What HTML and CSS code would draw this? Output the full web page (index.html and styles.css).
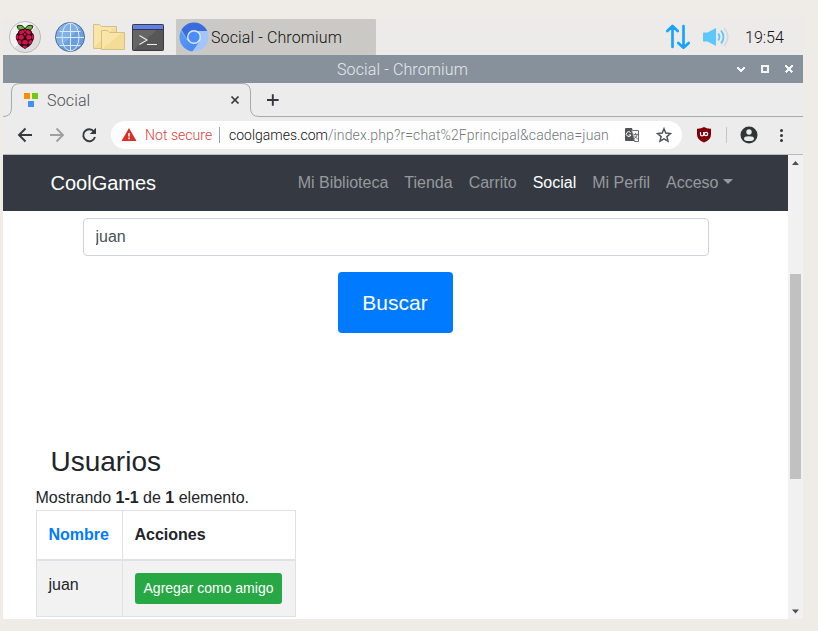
FILE: index.html
```
<!DOCTYPE html>
<html lang="es">
<head>
<meta charset="utf-8">
<title>Social</title>
<link rel="stylesheet" href="styles.css">
</head>
<body>
<div class="desktop">
  <header class="taskbar">
    <svg class="launchers" viewBox="3 19 165 36">
      <defs>
        <linearGradient id="disc" x1="0" y1="0" x2="1" y2="1"><stop offset=".5" stop-color="#f2f2f2"/><stop offset=".5" stop-color="#dedede"/></linearGradient>
        <linearGradient id="folder" x1="0" y1="0" x2="1" y2="1"><stop offset=".5" stop-color="#fae5a8"/><stop offset=".5" stop-color="#f4dc96"/></linearGradient>
        <linearGradient id="earth" x1="0" y1="0" x2="1" y2="1"><stop offset=".5" stop-color="#7fb0e8"/><stop offset=".5" stop-color="#6b9fdb"/></linearGradient>
        <linearGradient id="screen" x1="0" y1="0" x2="1" y2="1"><stop offset=".5" stop-color="#656565"/><stop offset=".5" stop-color="#575757"/></linearGradient>
      </defs>
      <circle cx="25" cy="37" r="15.6" fill="url(#disc)" stroke="#b5b5b5" stroke-width=".9"/>
      <path d="M24.7 31Q18.500 32 17 26Q23 23.500 25 29.500Q27 23.500 33 26Q31.500 32 25.300 31Z" fill="#6cae3c" stroke="#1b2912" stroke-width="1"/>
      <path d="M25 29.500C29 28 32 30 32.200 33C35 35 34.600 39 32.700 41C32 45 28 47 25 49C22 47 18 45 17.300 41C15.400 39 15 35 17.800 33C18 30 21 28 25 29.500Z" fill="#260811"/>
      <g fill="#d2124c"><ellipse cx="21.600" cy="32.200" rx="2.700" ry="1.900" transform="rotate(-25 21.600 32.200)"/><ellipse cx="28.400" cy="32.200" rx="2.700" ry="1.900" transform="rotate(25 28.400 32.200)"/><circle cx="25" cy="30.700" r="1.100"/><circle cx="21.300" cy="37.200" r="2.500"/><circle cx="28.700" cy="37.200" r="2.500"/><ellipse cx="17.300" cy="37" rx="1.100" ry="2.300"/><ellipse cx="32.700" cy="37" rx="1.100" ry="2.300"/><ellipse cx="25" cy="42.200" rx="2.800" ry="2.200"/><ellipse cx="19.700" cy="42" rx="1.600" ry="2.300" transform="rotate(-25 19.700 42)"/><ellipse cx="30.300" cy="42" rx="1.600" ry="2.300" transform="rotate(25 30.300 42)"/><ellipse cx="25" cy="46.700" rx="2.200" ry="1.200"/><circle cx="25" cy="34.200" r="1.200"/></g>
      <circle cx="70" cy="37" r="14.500" fill="url(#earth)" stroke="#4b6f9c"/>
      <g fill="none" stroke="#dbe8f6" stroke-width="1"><path d="M70.500 23V51M56 37.500H84M59.500 31.500H80.500M59.500 45.500H80.500"/><ellipse cx="70.500" cy="37" rx="8.500" ry="14"/></g>
      <g fill="url(#folder)" stroke="#d5bf85"><path d="M93.500 24.500H99.500L101.500 26.500H116.500V48.500H93.500Z"/><path d="M101.500 30.500H107.500L109.500 32.500H124.500V49.500H101.500Z"/></g>
      <rect x="132.500" y="24.500" width="31" height="26" rx=".8" fill="url(#screen)" stroke="#3b3b3f"/>
      <path d="M133 25H163V29.500H133Z" fill="#627fe5"/><path d="M133 29.500H163" stroke="#30365a"/>
      <path d="M139.500 35.500L147 40L139.500 44.500M147 44.500H157" fill="none" stroke="#eee" stroke-width="1.100"/>
    </svg>
    <div class="task">
      <svg viewBox="0 0 30 30"><defs><clipPath id="ball"><circle cx="15" cy="15" r="14.500"/></clipPath><linearGradient id="blue" x1="0" y1="0" x2="1" y2="1"><stop stop-color="#5ba0f7"/><stop offset="1" stop-color="#4683ef"/></linearGradient></defs>
        <g clip-path="url(#ball)"><path fill="#a4c5fb" d="M0 0H30V30H0Z"/><path fill="url(#blue)" d="M0 5L8 18L15 22L20 20L13 30H0Z"/><path fill="#3a6ddb" d="M2 7L6 0H27L30 9H15L8 17Z"/></g>
        <circle cx="15" cy="15" r="7" fill="#dce9ff"/><circle cx="15" cy="15" r="5.600" fill="#4b8df6"/></svg>
      <span>Social - Chromium</span>
    </div>
    <svg class="status" viewBox="664 19 68 36">
      <g fill="none" stroke="#16a5fb" stroke-width="2.700" stroke-linecap="round" stroke-linejoin="round"><path d="M672.500 47V26.500M667.300 31L672.500 26L677.700 31M683.500 26V47M678.300 43L683.500 47.700L688.700 43"/></g>
      <path fill="#5dc6fb" d="M703.500 32.500H707.500L716 28V46L707.500 41.500H703.500Q703 41.500 703 40.500V33.500Q703 32.500 703.500 32.500Z"/>
      <path d="M718.200 33.500Q720.700 37 718.200 40.500M721 30.500Q726 37 721 43.500" fill="none" stroke="#5dc6fb" stroke-width="1.800"/><path d="M724 28Q731.500 37 724 46" fill="none" stroke="#d7d8da" stroke-width="1.600"/>
    </svg>
    <time>19:54</time>
  </header>

  <main class="window">
    <div class="titlebar">
      <span>Social - Chromium</span>
      <svg viewBox="733 62 64 14" shape-rendering="crispEdges"><path d="M737.500 67.500L741 71L744.500 67.500" fill="none" stroke="#f3f4f5" stroke-width="2"/><rect x="762" y="66" width="6" height="6" fill="none" stroke="#f3f4f5" stroke-width="2"/><path d="M785.500 65.500L792.500 72.500M792.500 65.500L785.500 72.500" stroke="#f3f4f5" stroke-width="2"/></svg>
    </div>
    <div class="tabs">
      <svg class="tab-outline" viewBox="3 83 800 34"><path d="M3 116.500Q11.500 116.500 11.500 108V92Q11.500 83.500 20 83.500H242Q250.500 83.500 250.500 92V108Q250.500 116.500 259 116.500H803" fill="none" stroke="#a7a9aa"/></svg>
      <svg class="favicon" viewBox="0 0 14 14"><path fill="#ff8d00" d="M0 0H6V6H0Z"/><path fill="#73ca0a" d="M8 0H14V6H8Z"/><path fill="#4093f2" d="M4 8H10V14H4Z"/></svg>
      <span>Social</span>
      <svg class="tab-actions" viewBox="230 92 50 16"><path d="M231.500 96.500L238.500 103.500M238.500 96.500L231.500 103.500" stroke="#32383d" stroke-width="1.700"/><path d="M272.800 94.200V105.800M267 100H278.600" stroke="#32383d" stroke-width="1.900"/></svg>
    </div>
    <div class="toolbar">
      <svg class="history" viewBox="17 125 80 20" fill="none" stroke-width="1.900"><path d="M32 135H19.500M25.500 128.500L19 135L25.500 141.500" stroke="#343b40"/><path d="M50 135H62.500M56.500 128.500L63 135L56.500 141.500" stroke="#9da0a1"/><path d="M94 131.500A6 6 0 1 0 95 137" stroke="#343b40"/><path fill="#343b40" d="M96 127.800V134H89.800Z"/></svg>
      <div class="address">
        <svg class="warning" viewBox="0 0 16 14"><path fill="#d93025" d="M8 0L15.500 13H.500Z"/><path d="M8 5V8.500M8 9.500V11.300" stroke="#fff" stroke-width="1.600"/></svg>
        <span class="insecure">Not secure</span><i></i><span class="url"><b>coolgames.com</b>/index.php?r=chat%2Fprincipal&amp;cadena=juan</span>
        <svg class="page-tools" viewBox="623 126 50 18"><path fill="#505456" d="M626 128H632L636 141H626Q625 141 625 140V129Q625 128 626 128Z"/><path d="M632.500 130.500H638.500V141.500H634.500L631.500 130.500" fill="#f7f7f7" stroke="#686b6d"/><path d="M630.700 132.700A2.400 2.400 0 1 0 631 135H628.700" fill="none" stroke="#fff" stroke-width="1"/><path d="M633.500 134.500H638M635.500 133V134.500M637.300 134.500Q636.500 137.500 633.500 139M634 135.500L638 139.500" fill="none" stroke="#666" stroke-width=".9"/><path d="M664 128.800L665.800 133.100L670.400 133.500L666.900 136.600L668 141.200L664 138.800L660 141.200L661.100 136.600L657.600 133.500L662.200 133.100Z" fill="none" stroke="#50565a" stroke-width="1.500"/></svg>
      </div>
      <svg class="extensions" viewBox="694 124 96 22"><path d="M704 127Q707 129 711 128.800V134.500Q711 140 704 142.500Q697 140 697 134.500V128.800Q701 129 704 127Z" fill="#800008"/><path d="M700.500 132V134Q700.500 136 702 136Q703.700 136 703.700 134V132" fill="none" stroke="#fff" stroke-width="1.200"/><circle cx="706" cy="134" r="1.700" fill="none" stroke="#fff" stroke-width="1.200"/><path d="M726.500 127V143" stroke="#c2c4c5"/><circle cx="749" cy="135" r="8.500" fill="#303638"/><circle cx="749" cy="132" r="2.700" fill="#ececec"/><ellipse cx="749" cy="138.700" rx="5" ry="2.400" fill="#ececec"/><g fill="#303638"><circle cx="781.500" cy="130.500" r="1.500"/><circle cx="781.500" cy="135.500" r="1.500"/><circle cx="781.500" cy="140.500" r="1.500"/></g></svg>
    </div>
    <div class="viewport">
      <div class="page">
        <nav class="navbar"><a class="brand">CoolGames</a><a>Mi Biblioteca</a><a>Tienda</a><a>Carrito</a><a class="active">Social</a><a>Mi Perfil</a><a class="dropdown">Acceso</a></nav>
        <form class="search"><input type="text" value="juan" aria-label="Buscar usuarios"><button type="button">Buscar</button></form>
        <section class="users">
          <h2>Usuarios</h2>
          <p>Mostrando <b>1-1</b> de <b>1</b> elemento.</p>
          <table>
            <thead><tr><th><a>Nombre</a></th><th>Acciones</th></tr></thead>
            <tbody><tr><td>juan</td><td><button type="button">Agregar como amigo</button></td></tr></tbody>
          </table>
        </section>
      </div>
      <div class="scrollbar">
        <svg viewBox="0 0 15 15"><path fill="#505050" d="M4 10L7.500 6L11 10Z"/></svg>
        <div class="thumb"></div>
        <svg viewBox="0 0 15 15"><path fill="#505050" d="M4 5.500H11L7.500 9.500Z"/></svg>
      </div>
    </div>
  </main>
</div>
</body>
</html>
```
FILE: styles.css
```
* { box-sizing: border-box; }
body { margin: 0; background: #efebe6; overflow: hidden; font-family: "Liberation Sans", sans-serif; color: #212529; }
svg { display: block; flex: none; }
.desktop { width: 818px; height: 631px; padding: 19px 15px 12px 3px; }
.taskbar, .titlebar, .tabs, .toolbar { font-family: Roboto, sans-serif; font-weight: 300; white-space: nowrap; }
.taskbar { display: flex; height: 36px; align-items: center; background: #edebea; font-size: 16px; color: #111; }
.launchers { width: 165px; height: 36px; }
.task { width: 200px; height: 36px; margin-left: 8px; padding-left: 3px; display: flex; align-items: center; gap: 2px; background: #cbc9c5; border-radius: 1px; letter-spacing: .12px; }
.task svg { width: 30px; height: 30px; }
.status { width: 68px; height: 36px; margin-left: 288px; }
.taskbar time { margin-left: 13px; }
.window { width: 800px; height: 564px; }
.titlebar { height: 28px; padding: 0 6px 0 334px; display: flex; align-items: center; justify-content: space-between; background: #87919b; color: #e6e9eb; font-size: 16px; letter-spacing: .12px; }
.titlebar svg { width: 64px; height: 14px; }
.tabs { position: relative; height: 34px; padding-left: 21px; display: flex; align-items: center; background: #ececec; color: #4b5054; font-size: 16px; letter-spacing: .15px; }
.tab-outline { position: absolute; left: 0; top: 0; width: 800px; height: 34px; }
.favicon { width: 14px; height: 14px; }
.tabs span { width: 183px; margin-left: 9px; }
.tab-actions { width: 50px; height: 16px; }
.toolbar { height: 38px; padding: 0 13px 1px 14px; border-bottom: 1px solid #b9babb; display: flex; align-items: center; background: #ececec; }
.history { width: 80px; height: 20px; }
.address { width: 571px; height: 28px; margin-left: 14px; padding-left: 10px; border-radius: 14px; display: flex; align-items: center; background: #fff; font-size: 14px; }
.warning { width: 16px; height: 14px; }
.insecure { width: 67px; margin-left: 8px; color: #d94137; letter-spacing: .05px; }
.address i { width: 1px; height: 16px; margin-left: 7px; background: #9c9fa1; }
.url { width: 382px; margin-left: 9px; color: #72777a; letter-spacing: .12px; }
.url b { font-weight: 300; color: #111; letter-spacing: 0; }
.page-tools { width: 50px; height: 18px; margin-left: 12px; }
.extensions { width: 96px; height: 22px; margin-left: 12px; }
.viewport { display: flex; height: 464px; }
.page { width: 785px; background: #fff; overflow: hidden; font-size: 16px; line-height: 24px; }
.navbar { height: 56px; padding: 0 47.5px; display: flex; align-items: center; background: #353a42; white-space: nowrap; }
.navbar a { padding: 0 8px; color: #96999d; }
.navbar .brand { padding: 0; margin-right: auto; color: #fff; font-size: 20px; line-height: 30px; }
.navbar .active { color: #fff; }
.dropdown::after { content: ""; display: inline-block; margin-left: 4px; vertical-align: 4px; border: 5px solid transparent; border-top-color: currentColor; border-bottom: 0; }
.search { padding: 7px 79px 0 80px; display: flex; flex-direction: column; align-items: center; gap: 16px; }
.search input { width: 100%; height: 38px; padding: 6px 11.5px; border: 1px solid #ced4da; border-radius: 4px; color: #495057; font: 16px/24px "Liberation Sans", sans-serif; }
.search button { width: 115px; height: 61px; margin-right: 2px; border: 0; border-radius: 4px; background: #007bff; color: #fff; font: 21px/32px "Liberation Sans", sans-serif; }
.users { padding: 112px 0 0 32.5px; }
.users h2 { margin: 0 0 8px 15px; font-size: 28px; line-height: 33px; font-weight: 400; }
.users p { margin: 0; }
.users table { width: 260px; margin-left: .5px; border-collapse: collapse; table-layout: fixed; border: 1px solid #dee2e6; }
.users th, .users td { border: 1px solid #dee2e6; padding: 12px 12px 12px 11.5px; text-align: left; vertical-align: top; }
.users th { height: 49px; border-bottom-width: 2px; }
.users th:first-child { width: 86px; }
.users a { color: #007bff; }
.users td { height: 56px; background: #f2f2f2; }
.users td button { display: block; width: 147px; height: 31px; margin-left: .5px; padding: 0; border: 0; border-radius: 3px; background: #28a745; color: #fff; font: 14px/21px "Liberation Sans", sans-serif; white-space: nowrap; }
.scrollbar { width: 15px; background: #f1f1f1; display: flex; flex-direction: column; justify-content: space-between; }
.scrollbar svg { width: 15px; height: 15px; }
.thumb { width: 11px; height: 205px; margin: 104px 2px auto; background: #c1c1c1; }
```
